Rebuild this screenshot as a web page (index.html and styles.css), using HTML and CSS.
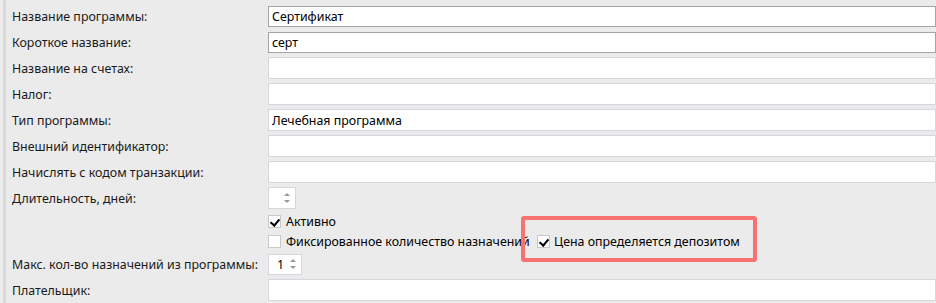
FILE: index.html
```html
<!DOCTYPE html>
<html lang="ru">
<head>
  <meta charset="UTF-8">
  <title>Программа</title>
  <link rel="stylesheet" href="styles.css">
</head>
<body>
  <div class="form">
    <div class="row">
      <span class="label">Название программы:</span>
      <input class="field dark" type="text" value="Сертификат" readonly>
    </div>
    <div class="row">
      <span class="label">Короткое название:</span>
      <input class="field dark" type="text" value="серт" readonly>
    </div>
    <div class="row">
      <span class="label">Название на счетах:</span>
      <input class="field" type="text" readonly>
    </div>
    <div class="row">
      <span class="label">Налог:</span>
      <input class="field" type="text" readonly>
    </div>
    <div class="row">
      <span class="label">Тип программы:</span>
      <input class="field" type="text" value="Лечебная программа" readonly>
    </div>
    <div class="row">
      <span class="label">Внешний идентификатор:</span>
      <input class="field" type="text" readonly>
    </div>
    <div class="row">
      <span class="label">Начислять с кодом транзакции:</span>
      <input class="field" type="text" readonly>
    </div>
    <div class="row">
      <span class="label">Длительность, дней:</span>
      <div class="spin">
        <span class="spin-value"></span>
        <span class="arrows"><i class="up"></i><i class="down"></i></span>
      </div>
    </div>

    <div class="row check-row">
      <span class="label"></span>
      <label class="check"><span class="box checked"></span>Активно</label>
    </div>
    <div class="row check-row">
      <span class="label"></span>
      <label class="check fixed"><span class="box"></span>Фиксированное количество назначений</label>
      <label class="check deposit"><span class="box checked"></span>Цена определяется депозитом</label>
    </div>

    <div class="row">
      <span class="label">Макс. кол-во назначений из программы:</span>
      <div class="spin wide">
        <span class="spin-value">1</span>
        <span class="arrows"><i class="up"></i><i class="down"></i></span>
      </div>
    </div>
    <div class="row">
      <span class="label">Плательщик:</span>
      <input class="field" type="text" readonly>
    </div>

    <div class="highlight"></div>
  </div>
</body>
</html>
```

FILE: styles.css
```css
* {
  margin: 0;
  padding: 0;
  box-sizing: border-box;
}

body {
  width: 936px;
  height: 303px;
  overflow: hidden;
  background-color: #ebebeb;
  font-family: "Noto Sans", "Open Sans", sans-serif;
  font-size: 12.4px;
  color: #1a1a1a;
}

.form {
  position: relative;
  height: 303px;
  padding-top: 3px;
  border-left: 3px solid #ebebeb;
}

.form::before {
  content: "";
  position: absolute;
  left: 0;
  top: 0;
  bottom: 0;
  width: 3px;
  background-color: #d9d9d9;
}

.row {
  display: flex;
  align-items: center;
  height: 26px;
}

.label {
  flex: 0 0 265px;
  padding-left: 9px;
  white-space: nowrap;
}

.field {
  width: 700px;
  height: 22px;
  padding: 0 3px;
  border: 1px solid #d6d6de;
  background-color: #fff;
  font-family: inherit;
  font-size: 12.4px;
  color: #000;
  outline: none;
}

.field.dark {
  height: 21px;
  border-color: #a4a4a4;
}

.spin {
  display: flex;
  align-items: center;
  width: 28px;
  height: 22px;
  background-color: #fff;
  border: 1px solid #d6d6de;
}

.spin.wide {
  width: 34px;
  height: 21px;
}

.spin-value {
  flex: 1;
  padding-left: 8px;
  color: #000;
}

.arrows {
  display: flex;
  flex-direction: column;
  justify-content: center;
  align-items: center;
  gap: 4px;
  width: 14px;
  padding-right: 2px;
  height: 100%;
}

.arrows i {
  display: block;
  width: 0;
  height: 0;
  border-left: 3px solid transparent;
  border-right: 3px solid transparent;
}

.arrows .up {
  border-bottom: 3px solid #9a9a9a;
}

.arrows .down {
  border-top: 3px solid #9a9a9a;
}

.check-row {
  height: 20px;
}

.check {
  display: flex;
  align-items: center;
  gap: 5px;
  white-space: nowrap;
  color: #000;
}

.check.fixed {
  width: 263px;
}

.check.deposit {
  margin-left: 6px;
  gap: 4px;
}

.box {
  position: relative;
  flex: 0 0 13px;
  width: 13px;
  height: 13px;
  background-color: #fff;
  border: 1px solid #c9c9c9;
}

.box.checked::after {
  content: "";
  position: absolute;
  left: 3px;
  top: 1px;
  width: 4px;
  height: 7px;
  border-right: 2px solid #000;
  border-bottom: 2px solid #000;
  transform: rotate(40deg);
}

.highlight {
  position: absolute;
  left: 518px;
  top: 216px;
  width: 236px;
  height: 46px;
  border: 4px solid #f87272;
  border-radius: 3px;
}
```
